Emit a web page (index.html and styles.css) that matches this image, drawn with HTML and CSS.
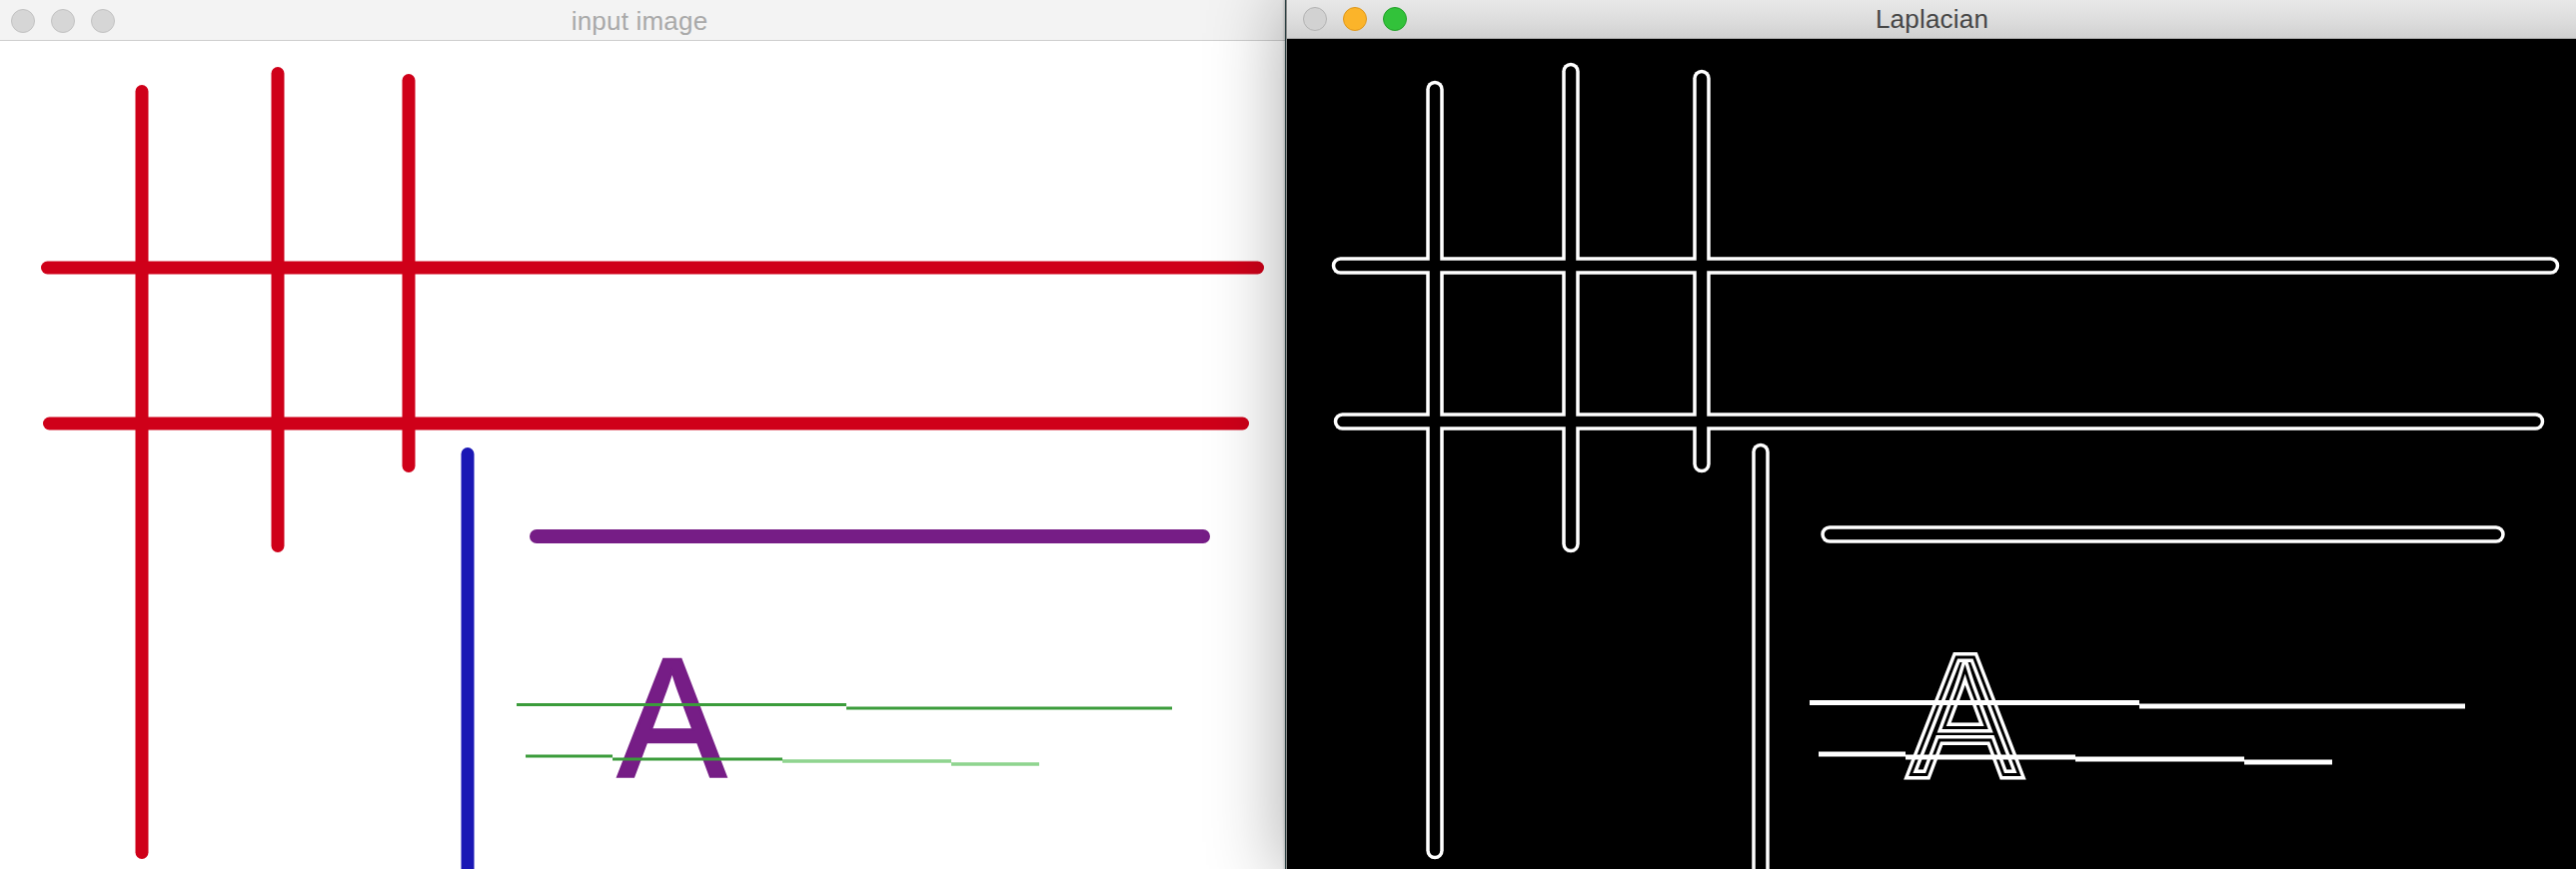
FILE: index.html
```html
<!DOCTYPE html>
<html lang="en">
<head>
<meta charset="utf-8">
<title>input image / Laplacian</title>
<link rel="stylesheet" href="styles.css">
</head>
<body>
<svg class="defs" width="0" height="0" aria-hidden="true">
  <defs>
    <g id="g-red">
      <path d="M148 50.5V812.5"/>
      <path d="M284 32.5V505.5"/>
      <path d="M415 39.5V425.5"/>
      <path d="M53.5 227H1264.5"/>
      <path d="M55.5 383H1249.5"/>
    </g>
    <g id="g-blue">
      <path d="M474 413.5V860"/>
    </g>
    <g id="g-purple">
      <path d="M543 496H1210"/>
    </g>
    <g id="g-green">
      <path d="M523 664.5H853"/>
      <path d="M853 668H1179"/>
      <path d="M532 716H619"/>
      <path d="M619 719H789"/>
    </g>
    <g id="g-green-soft">
      <path d="M789 721H958"/>
      <path d="M958 724H1046"/>
    </g>
    <text id="glyph-a" x="650" y="736.5" transform="scale(0.96 1)">A</text>
  </defs>
</svg>

<div class="desktop">
  <section class="window win-input">
    <header class="titlebar">
      <div class="lights">
        <span class="light"></span>
        <span class="light"></span>
        <span class="light"></span>
      </div>
      <div class="title">input image</div>
      <div class="spacer"></div>
    </header>
    <div class="content content-white">
      <svg class="canvas" viewBox="0 0 1292 840" width="1292" height="840">
        <use href="#g-red" class="ln ln-red"/>
        <use href="#g-blue" class="ln ln-blue"/>
        <use href="#g-purple" class="ln ln-purple"/>
        <use href="#glyph-a" class="glyph glyph-purple"/>
        <use href="#g-green" class="ln ln-green"/>
        <use href="#g-green-soft" class="ln ln-green-soft"/>
      </svg>
    </div>
  </section>

  <section class="window win-lap">
    <header class="titlebar">
      <div class="lights">
        <span class="light"></span>
        <span class="light light-min"></span>
        <span class="light light-max"></span>
      </div>
      <div class="title">Laplacian</div>
      <div class="spacer"></div>
    </header>
    <div class="content content-black">
      <svg class="canvas" viewBox="0 0 1292 840" width="1292" height="840">
        <use href="#g-red" class="ln edge-out"/>
        <use href="#g-blue" class="ln edge-out"/>
        <use href="#g-purple" class="ln edge-out"/>
        <use href="#g-red" class="ln edge-in"/>
        <use href="#g-blue" class="ln edge-in"/>
        <use href="#g-purple" class="ln edge-in"/>
        <use href="#glyph-a" class="glyph glyph-out"/>
        <use href="#glyph-a" class="glyph glyph-in"/>
        <use href="#g-green" class="ln thin-out"/>
        <use href="#g-green-soft" class="ln thin-out"/>
      </svg>
    </div>
  </section>
</div>
</body>
</html>
```

FILE: styles.css
```css
html, body {
  margin: 0;
  padding: 0;
}

body {
  width: 2578px;
  height: 870px;
  overflow: hidden;
  background: #3f5f62;
  font-family: "Liberation Sans", Arial, "Helvetica Neue", sans-serif;
}

.defs {
  position: absolute;
  width: 0;
  height: 0;
  overflow: hidden;
}

.desktop {
  position: relative;
  width: 2578px;
  height: 870px;
}

.window {
  position: absolute;
  display: flex;
  flex-direction: column;
  height: 880px;
  overflow: hidden;
}

.win-input {
  left: -6px;
  top: 0;
  width: 1292px;
}

.win-lap {
  left: 1287px;
  top: -2px;
  width: 1292px;
  box-shadow: -4px 0 70px rgba(0, 0, 0, 0.32), -1px 0 3px rgba(0, 0, 0, 0.35);
  border-left: 1px solid #8a8a8a;
  box-sizing: border-box;
}

.titlebar {
  flex: 0 0 auto;
  height: 40px;
  display: grid;
  grid-template-columns: 1fr auto 1fr;
  align-items: center;
  box-sizing: content-box;
}

.win-input .titlebar {
  background: #f3f3f3;
  border-bottom: 1px solid #cfcfcf;
}

.win-lap .titlebar {
  background: linear-gradient(to bottom, #e9e9e9 0%, #dcdcdc 60%, #d0d0d0 100%);
  border-bottom: 1px solid #a6a6a6;
}

.lights {
  display: flex;
  gap: 16px;
  padding-left: 17px;
  align-items: center;
}

.win-lap .lights {
  padding-left: 16px;
}

.light {
  width: 24px;
  height: 24px;
  border-radius: 50%;
  box-sizing: border-box;
  background: #d6d6d6;
  border: 1px solid #c2c2c2;
}

.win-lap .light {
  background: #d2d2d2;
  border-color: #b3b3b3;
}

.win-lap .light-min {
  background: #fbb42a;
  border-color: #de971c;
}

.win-lap .light-max {
  background: #32c23a;
  border-color: #22a129;
}

.title {
  font-size: 26px;
  line-height: 40px;
  letter-spacing: 0.2px;
  white-space: nowrap;
  padding-top: 1px;
}

.win-input .title {
  color: #a9a9a9;
}

.win-lap .title {
  color: #464646;
}

.content {
  flex: 1 1 auto;
  overflow: hidden;
}

.content-white {
  background: #ffffff;
}

.content-black {
  background: #000000;
}

.canvas {
  display: block;
}

/* strokes */
.ln {
  fill: none;
  stroke-linecap: round;
}

.ln-red {
  stroke: #cf0019;
  stroke-width: 13;
}

.ln-blue {
  stroke: #1a17b5;
  stroke-width: 13;
}

.ln-purple {
  stroke: #761d86;
  stroke-width: 14;
}

.ln-green {
  stroke: #3b9c3b;
  stroke-width: 3;
  stroke-linecap: butt;
}

.ln-green-soft {
  stroke: #8fd48f;
  stroke-width: 3.5;
  stroke-linecap: butt;
}

.glyph {
  font-family: "Liberation Sans", Arial, sans-serif;
  font-size: 170px;
  stroke-linejoin: miter;
}

.glyph-purple {
  fill: #761d86;
  stroke: #761d86;
  stroke-width: 2.5;
}

/* Laplacian edge rendering */
.edge-out {
  stroke: #ffffff;
  stroke-width: 17.5;
}

.edge-in {
  stroke: #000000;
  stroke-width: 10.5;
}

.thin-out {
  stroke: #ffffff;
  stroke-width: 5;
  stroke-linecap: butt;
}

.glyph-out {
  fill: none;
  stroke: #ffffff;
  stroke-width: 10;
}

.glyph-in {
  fill: none;
  stroke: #000000;
  stroke-width: 3;
}
```
